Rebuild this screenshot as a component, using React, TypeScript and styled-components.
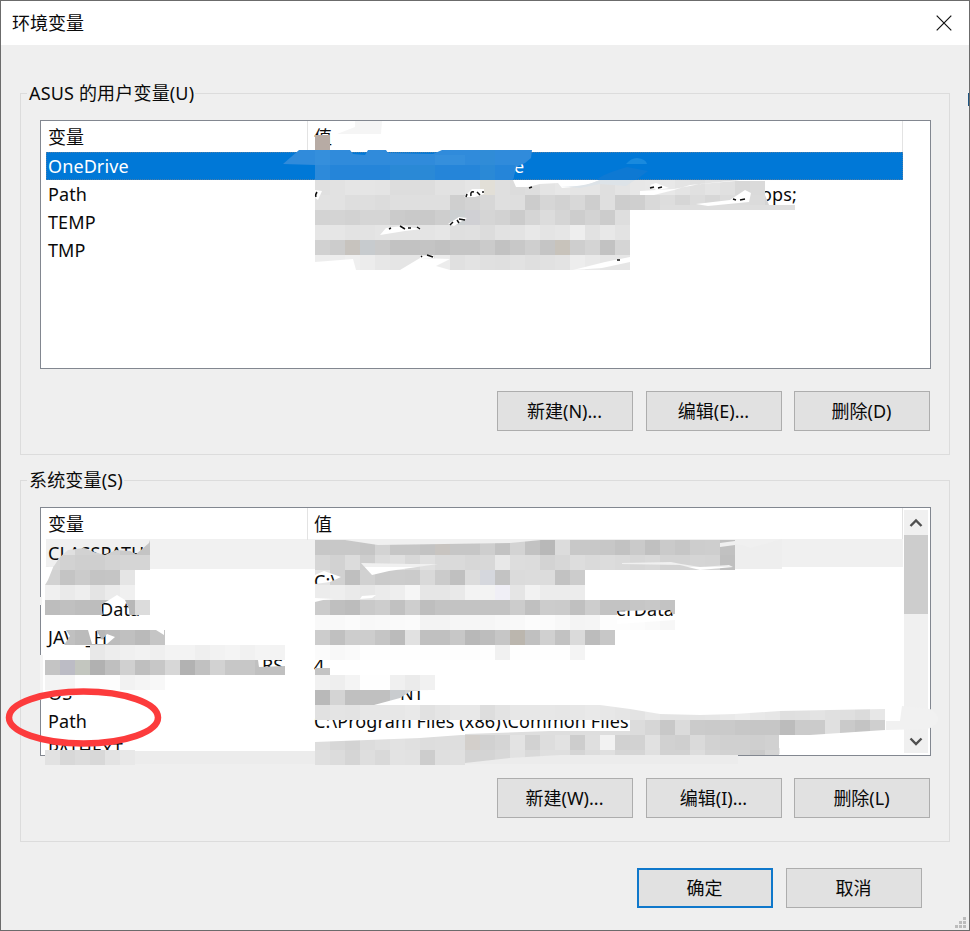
import React from "react";
import styled, { createGlobalStyle, css } from "styled-components";

const GlobalStyle = createGlobalStyle`
  body { margin: 0; background: #f0f0f0; }
  * { box-sizing: border-box; }
`;

const Dialog = styled.div`
  position: relative;
  width: 970px;
  height: 931px;
  border: 1px solid #6b6b6b;
  background: #efefef;
  color: #0a0a0a;
  font: 18px/24px "Noto Sans", "Noto Sans CJK SC", sans-serif;
  font-weight: 400;
  display: flex;
  flex-direction: column;
  overflow: hidden;
`;

const TitleBar = styled.header`
  flex: none;
  height: 44px;
  padding: 0 17px 1px 11px;
  background: #fff;
  display: flex;
  align-items: center;
  justify-content: space-between;
`;

const CloseIcon = styled.svg`
  width: 16px;
  height: 16px;
  fill: none;
  stroke: #111;
  stroke-width: 1.2;
`;

const Group = styled.section<{ $first?: boolean }>`
  flex: none;
  width: 930px;
  height: 362px;
  margin: ${(p) => (p.$first ? "48px" : "25px")} 0 0 19px;
  padding: 0 19px;
  border: 1px solid #dcdcdc;
`;

const Caption = styled.div`
  width: max-content;
  height: 24px;
  margin: -13px 0 15px -13px;
  padding: 0 1px 0 2px;
  letter-spacing: 0.17px;
  background: #efefef;
`;

const ListBox = styled.div`
  width: 891px;
  height: 249px;
  border: 1px solid #828790;
  background: #fff;
  display: flex;
`;

const Rows = styled.div`
  width: 862px;
  flex: none;
`;

const columns = css`
  display: grid;
  grid-template-columns: 260px 1fr;
  margin-left: 5px;
  white-space: nowrap;
`;

const HeaderRow = styled.div`
  ${columns}
  height: 31px;
  line-height: 32px;
  border-right: 1px solid #e3e3e3;
`;

const HeaderCell = styled.div<{ $divided?: boolean }>`
  padding-left: ${(p) => (p.$divided ? "2px" : "8px")};
  width: ${(p) => (p.$divided ? "262px" : "auto")};
  border-right: ${(p) => (p.$divided ? "1px solid #e3e3e3" : "0")};
`;

const Row = styled.div<{ $selected?: boolean; $shaded?: boolean }>`
  ${columns}
  height: 28px;
  line-height: 28px;
  letter-spacing: 0.1px;
  color: ${(p) => (p.$selected ? "#fff" : "inherit")};
  background: ${(p) => (p.$selected ? "#0078d7" : p.$shaded ? "#f0f0f0" : "#fff")};
  outline: ${(p) => (p.$selected ? "1px dotted #4d7ea8" : "none")};
  outline-offset: -1px;

  &:nth-child(9) {
    height: 20px;
  }
`;

const Name = styled.span<{ $indent: number }>`
  padding-left: ${(p) => 2 + p.$indent}px;
`;

const Value = styled.span<{ $indent: number }>`
  padding-left: ${(p) => 8 + p.$indent}px;
`;

const ScrollBar = styled.div`
  width: 24px;
  margin: 2px 0 2px 1px;
  background: #f0f0f0;
  display: flex;
  flex-direction: column;
  justify-content: space-between;
`;

const Thumb = styled.div`
  height: 79px;
  margin-bottom: auto;
  background: #cdcdcd;
`;

const Arrow = styled.svg`
  width: 24px;
  height: 25px;
  fill: none;
  stroke: #505050;
  stroke-width: 2.4;
`;

const Actions = styled.div<{ $footer?: boolean }>`
  display: flex;
  justify-content: flex-end;
  gap: ${(p) => (p.$footer ? "13px" : "12px")};
  margin: ${(p) => (p.$footer ? "26px 47px 0 0" : "22px 0 0")};
`;

const Button = styled.button<{ $primary?: boolean; $narrowGap?: boolean }>`
  width: 136px;
  height: 40px;
  padding: 0 1px 1px 0;
  margin-right: ${(p) => (p.$narrowGap ? "1px" : "0")};
  font: inherit;
  color: inherit;
  background: #e1e1e1;
  border: ${(p) => (p.$primary ? "2px solid #0f78cb" : "1px solid #adadad")};
`;

const Overlay = styled.svg`
  position: absolute;
  left: -1px;
  top: -1px;
  width: 970px;
  height: 931px;
  pointer-events: none;
`;

const Grip = styled.svg`
  position: absolute;
  right: 2px;
  bottom: 1px;
  width: 13px;
  height: 13px;
  fill: #bcbcbc;
`;

type Entry = { name: string; value?: string; nameIndent?: number; valueIndent?: number; selected?: boolean; shaded?: boolean };

const userEntries: Entry[] = [
  { name: "OneDrive", value: "e", valueIndent: 200, selected: true },
  { name: "Path", value: "ops;", valueIndent: 447 },
  { name: "TEMP" },
  { name: "TMP" },
];

const systemEntries: Entry[] = [
  { name: "CLASSPATH", shaded: true },
  { name: "", value: "C:\\" },
  { name: "Data", nameIndent: 52, value: "erData", valueIndent: 302 },
  { name: "JAVA_H" },
  { name: "RS", nameIndent: 214, value: "4" },
  { name: "OS", value: "NT", valueIndent: 86 },
  { name: "Path", value: "C:\\Program Files (x86)\\Common Files" },
  { name: "PATHEXT" },
];

// Mosaic strips: [x, y, grey level per 15px cell]
const strips: [number, number, string][] = [
  [315, 135, "b2"],
  [315, 180, "e0 e2 e5 e5 e4 dd dd dd e2 e2 e5 df df dc de e4 e7 e5 e5 df e4 e7 e8 e8 e4 e0 e4 e0 d8 da"],
  [315, 195, "e2 e2 de de dc df df df df cf d3 d7 df de cc d6 d2 d8 ce df cd cf d9 dd d6 dc d7 dc dc db d4 dd"],
  [315, 210, "d3 d4 d2 d5 d5 cb c9 c9 ce d0 d3 d5 d2 cb d5 dc d5 cd d3 cc de"],
  [315, 225, "e6 e6 e3 e3 e5 e5 e5 e4 e6 df e0 dc e2 e3 e8 e4 e6 ee e2 e8 e3"],
  [315, 240, "d1 cc c4 cb ca c2 c2 c4 c1 c5 c5 cb c2 c8 cf c5 c6 ce d4 c2 d5"],
  [315, 255, "ed ed ef ec e7 e5 e5 e5 ec e0 e3 e0 df e2 df e1 e3 ed e9 e6 e6"],
  [45, 540, "ec e0 d2 d2 cf ca c4"],
  [45, 555, "d7 d2 cf cf d3 d5 d5"],
  [45, 570, "d2 c4 cb c4 c5 e5"],
  [45, 585, "f0 ea ee e4 eb f0"],
  [45, 600, "bd c0 bd bd c0 b8 dc"],
  [60, 630, "c0 bb b8 bc c0 ba c5"],
  [90, 645, "e8 ed f0 f2 ef f3 f3 ef f2 f4 f1 f4 f3"],
  [45, 660, "c4 c1 c1 b1 bf d0 bf c7 d7 b2 c1 d2 c7 c7 c0 c0"],
  [45, 675, "f3 f5 fd fd fd f2 f5 f8"],
  [45, 750, "e2 d8 dc d8 e3 e8"],
  [315, 540, "c7 c8 c8 c5 d3 c6 c6 c3 c7 c6 c6 ce c2 d3 c2 b8 dc c8 c8 c7 c2 ca c0 ca c6 cd ce c1"],
  [315, 555, "d6 d2 dc ce dc e0 d8 e0 da da d7 d8 e8 dd dc d3 d7 dd da dc da d7 d9 d3 d3 d5 d4 bf"],
  [315, 570, "e4 d1 bf d1 ca cc cb d9 cb c0 dc dc c3 db dc dc c2 cc"],
  [315, 585, "ec ee ea e7 eb ee f6 e6 e6 e9 f3 f3 f3 e5 f2 ec ec ec"],
  [315, 600, "cb bf bc c9 cd c1 ce be c3 c3 c3 c3 c3 cc c0 cc cb c0 cd c3 c3 c6 c8 c3"],
  [315, 615, "f9 f9 fb f8 f9 fa fb f3 f3 f6 f6 f6 f8 f9 fc fb f8 f4 f5 fd fd fc fa f7"],
  [315, 630, "cc c0 cd cd c5 bb e1 c0 c0 c7 b8 bd c6 b8 c0 d0 c2 da bc c7"],
  [315, 645, "fb f8 fa fe fe fe fe fe fe fd fd fe f1 fe fe fe fe f4"],
  [315, 668, "c4"],
  [315, 675, "f1 ee f4 fe fe f0 eb f1"],
  [315, 690, "b9 d4 c0 c0 c0 c8 d2"],
  [315, 705, "e1 e4 e3 e7 e7 e7 e9 e1 e5 e8 e8 dd e3 e7 e7 e7 e6 e7 e9 e7 e5 e3 e8 e4 e4 e5 e6 e9 ec e8 e6 df e0 e3 e0 df db e7"],
  [630, 720, "dc d6 c8 db cb ca ca c7 c6 c6 bc cb cb e0 ca c4 cf"],
  [315, 735, "dd d7 d3 dc df e2 e0 dd de de d1 d1 d5 e3 d2 dd e2 cd df f2 d1 d2 e1 d1 cf da d2 d0 d0 cf d1"],
  [315, 750, "df dc d5 de d9 e3 e2 cd df e0 d4 d4 d8 e2 d9 df df d5 dd e0 d6 d5 e0 d2 d2 dd d4 d2 d2 ca d4"],
];

const tinted: [number, number, string][] = [
  [315, 135, "#b7aba4"], [450, 210, "#ccd0d2"], [465, 210, "#d0d0d4"], [345, 240, "#c7c3be"],
  [360, 240, "#c7cbce"], [555, 240, "#c8c3bb"], [480, 180, "#e2dfd7"], [60, 660, "#bcbcc5"],
  [75, 660, "#c3c6bf"], [435, 540, "#c8c4c0"], [465, 735, "#d3cfcb"], [510, 630, "#bbb6ae"],
  [480, 570, "#d5d7dd"], [495, 585, "#f0eff6"], [390, 690, "#c9cccf"],
];

// Areas of the dialog that the brush strokes left uncovered.
const gaps = [
  "640,191 674,189 700,184 750,179 800,179 800,189 768,189 768,181 735,181 690,185 674,190 654,195 640,195",
  "513,180 600,180 584,186 562,188 558,183 540,184 528,187 516,187",
  "315,190 322,191 318,200 315,198", "464,197 472,189 484,189 484,194 475,197",
  "386,228 402,226 422,229 405,231 380,235", "448,224 459,217 467,218 454,226",
  "420,256 433,255 434,258 420,258", "315,262 353,259 356,270 315,270",
  "400,270 420,258 450,259 436,266 450,270", "573,270 605,262 630,257 630,262 602,268",
  "696,204 730,200 745,190 751,193 749,202 708,206", "765,195 768,188 800,188 800,205 769,205",
  "650,185 656,183 669,188 656,190",
  "45,540 150,540 149,543 141,550 136,554 130,551 116,550 105,555 94,552 84,548 68,550 60,557 54,566 45,567",
  "45,567 54,565 48,580 45,585", "101,605 117,595 125,600 129,609 130,621 103,616",
  "60,630 66,630 70,636 64,645 60,645", "88,630 96,630 102,640 107,634 115,637 107,644 92,644", "150,630 156,630 164,635 164,630",
  "258,660 285,660 285,666 259,667",
  "315,540 345,540 378,545 510,543 541,540 541,538 315,538",
  "361,563 372,575 389,571 438,564 410,564", "315,575 324,571 341,577 330,582 315,584",
  "362,596 376,595 372,598 360,599", "315,602 323,600 334,599 315,598",
  "617,611 670,610 674,617 617,618", "617,620 675,614 675,620 617,624",
  "720,547 720,543 735,541 735,545", "622,563 671,562 681,564 700,567 729,565 733,567 700,570 680,565 622,564",
  "374,705 400,698 411,691 434,690 434,705",
  "600,705 885,705 885,709 830,710 780,711 735,714 700,715 660,714 630,709",
  "779,735 780,735 780,755 779,755", "465,763 510,758 560,755 780,755 780,765 465,765",
  "780,735 810,735 885,730 900,730 900,736 780,736",
];

const mosaicCells = strips.flatMap(([x, y, levels]) =>
  levels.split(" ").map((v, i) => ({ x: x + i * 15, y, height: y === 668 ? 7 : 15, fill: `#${v}${v}${v}` })),
);

function Censoring() {
  return (
    <Overlay viewBox="0 0 970 931" aria-hidden="true">
      <defs>
        <mask id="brush" maskUnits="userSpaceOnUse" x="0" y="0" width="970" height="931">
          <rect width="970" height="931" fill="white" />
          {gaps.map((points) => <polygon key={points} points={points} fill="black" />)}
        </mask>
      </defs>

      <path d="M355 121L382 121L381 134L337 134L355 127Z" fill="#f5f5f5" />
      <path d="M150 540H315V569H150Z" fill="#f1f1f1" />
      <path d="M735 544Q748 546 750 548L782 539V569L735 569Z" fill="#eeeeee" />
      <path d="M40 597H42V605H40ZM40 655H43V699L40 700Z" fill="#f4f4f4" />
      <path d="M45 684H80V696H45ZM398 684H428V691H411L398 698Z" fill="#fdfdfd" />
      <path d="M738 754L780 748L780 754H738V764H45V751L315 751V745L520 735L600 735L620 754Z" fill="#ececec" />

      <g shapeRendering="crispEdges" mask="url(#brush)">
        {mosaicCells.map((c) => <rect key={`${c.x}-${c.y}`} x={c.x} y={c.y} width="15" height={c.height} fill={c.fill} />)}
        {tinted.map(([x, y, fill]) => <rect key={`${x}-${y}`} x={x} y={y} width="15" height="15" fill={fill} />)}
        <rect x="660" y="205" width="135" height="5" fill="#dedede" />
      </g>
      <path d="M315 734H475L420 738L315 742Z" fill="#fff" />
      <path d="M630 731V735H465V734L550 731Z" fill="#dedede" />

      <path d="M283 164L299 150H350L353 154L365 155L368 150H386L388 153L433 154L442 150H532L531 158L525 163L516 167L513 180H315V165Z" fill="#308bdb" />
      <path d="M315 165H515L513 180H315Z" fill="#2585d9" />
      <path d="M315 150H330V180H315ZM435 155H465V165H435Z" fill="#4297df" opacity=".3" />
      <path d="M390 165H435V180H390ZM480 150H495V180H480Z" fill="#318fd1" opacity=".4" />
      <path d="M626 164Q631 158 637 158Q646 159 647 164Z" fill="#198ade" />
      <path d="M596 180Q603 174 627 167L648 171L636 180Z" fill="#0e79d3" />
      <path d="M560 186Q582 188 600 180H635L626 186L600 184L580 188Z" fill="#dde3e8" />

      <g fill="none" stroke="#111" strokeWidth="1.5">
        <path d="M316 197Q315 195 317 192M466 197L467 194M471 196Q470 191 474 192M477 192L480 195M483 191V193" />
        <path d="M389 229L391 228M400 226L405 229M408 228L411 228M417 227L420 229M450 225L453 222M457 220L459 223M459 219L465 220" />
        <path d="M421 257L422 256M427 255L433 257M650 188L654 187M658 188L662 187M733 199L736 200M740 200L745 199M617 260L620 260M529 188L532 187" />
      </g>

      <path d="M902 706L930 709Q939 713 938 721Q935 728 925 729L886 730V721H900Z" fill="#f1f1f1" />
      <ellipse cx="83.5" cy="717.5" rx="74.5" ry="26" fill="none" stroke="#fc3b3c" strokeWidth="6.5" />
      <rect x="968" y="93" width="2" height="13" fill="#1f5783" />
      <rect x="0" y="200" width="1" height="10" fill="#222" />
    </Overlay>
  );
}

function VariableList({ entries, scroll }: { entries: Entry[]; scroll?: boolean }) {
  return (
    <ListBox>
      <Rows>
        <HeaderRow>
          <HeaderCell $divided>变量</HeaderCell>
          <HeaderCell>值</HeaderCell>
        </HeaderRow>
        {entries.map((e, i) => (
          <Row key={i} $selected={e.selected} $shaded={e.shaded}>
            <Name $indent={e.nameIndent ?? 0}>{e.name}</Name>
            <Value $indent={e.valueIndent ?? 0}>{e.value}</Value>
          </Row>
        ))}
      </Rows>
      {scroll && (
        <ScrollBar>
          <Arrow viewBox="0 0 24 25"><path d="M6.5 16L12 10.5L17.5 16" /></Arrow>
          <Thumb />
          <Arrow viewBox="0 0 24 25"><path d="M6.5 10.5L12 16L17.5 10.5" /></Arrow>
        </ScrollBar>
      )}
    </ListBox>
  );
}

export default function App() {
  return (
    <>
      <GlobalStyle />
      <Dialog>
        <TitleBar>
          <span>环境变量</span>
          <CloseIcon viewBox="0 0 16 16"><path d="M.7.7L15.3 15.3M15.3.7L.7 15.3" /></CloseIcon>
        </TitleBar>
        <Group $first>
          <Caption>ASUS 的用户变量(U)</Caption>
          <VariableList entries={userEntries} />
          <Actions>
            <Button $narrowGap>新建(N)...</Button>
            <Button>编辑(E)...</Button>
            <Button>删除(D)</Button>
          </Actions>
        </Group>
        <Group>
          <Caption>系统变量(S)</Caption>
          <VariableList entries={systemEntries} scroll />
          <Actions>
            <Button $narrowGap>新建(W)...</Button>
            <Button>编辑(I)...</Button>
            <Button>删除(L)</Button>
          </Actions>
        </Group>
        <Actions $footer>
          <Button $primary>确定</Button>
          <Button>取消</Button>
        </Actions>
        <Censoring />
        <Grip viewBox="0 0 13 13"><path d="M9 1h3v3H9zM5 5h3v3H5zM9 5h3v3H9zM1 9h3v3H1zM5 9h3v3H5zM9 9h3v3H9z" /></Grip>
      </Dialog>
    </>
  );
}
